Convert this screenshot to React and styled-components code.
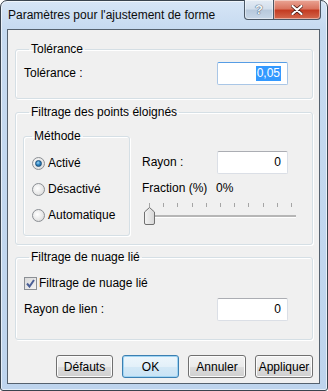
import styled, { createGlobalStyle } from 'styled-components'

const Global = createGlobalStyle`
  html, body { margin: 0; padding: 0; background: #ffffff; }
  body { font-family: "Segoe UI", "Liberation Sans", Arial, sans-serif; font-size: 12px; color: #000; }
`

const Window = styled.div`
  width: 328px;
  height: 391px;
  box-sizing: border-box;
  border: 1px solid #39434e;
  border-radius: 7px 7px 3px 3px;
  background: linear-gradient(180deg, #d6e5f6 0px, #c6daf0 28px, #bed4ed 100%);
  display: flex;
  flex-direction: column;
  padding: 0 7px 6px 6px;
  box-shadow: inset 0 0 0 1px rgba(255,255,255,0.6);
`

const TitleBar = styled.div`
  height: 28px;
  display: flex;
  align-items: flex-start;
  justify-content: space-between;
`

const Title = styled.div`
  padding: 7px 0 0 1px;
  font-size: 12px;
  color: #0c0c0c;
`

const Caption = styled.div`
  display: flex;
  margin-top: -1px;
  margin-right: -1px;
`

const CapBtn = styled.div`
  height: 20px;
  width: ${p => p.w}px;
  box-sizing: border-box;
  border: 1px solid #4b5866;
  border-top: none;
  display: flex;
  align-items: center;
  justify-content: center;
  color: #fff;
  font-weight: bold;
  font-size: 13px;
  background: ${p => p.close
    ? 'linear-gradient(180deg, #eaa595 0%, #da7560 45%, #c43c22 55%, #d4694d 100%)'
    : 'linear-gradient(180deg, #e3ebf4 0%, #d3dfec 45%, #b8c9dc 55%, #c7d6e7 100%)'};
  border-radius: ${p => p.close ? '0 0 4px 0' : '0 0 0 4px'};
  border-left: ${p => p.close ? 'none' : '1px solid #4b5866'};
  box-shadow: inset 0 0 0 1px rgba(255,255,255,0.45);
`

const Client = styled.div`
  flex: 1;
  background: #f0f0f0;
  border: 1px solid #55616e;
  display: flex;
  flex-direction: column;
  padding: 12px 6px 5px 7px;
`

const Group = styled.fieldset`
  margin: ${p => p.mt || 0}px 0 0 0;
  padding: 0 8px;
  border: 1px solid #d5dfe5;
  border-radius: 3px;
  box-shadow: inset 1px 1px 0 #ffffff, 1px 1px 0 #ffffff;
  min-width: 0;
  height: ${p => p.h}px;
  box-sizing: border-box;
`

const Legend = styled.legend`
  padding: 0 2px;
  margin-left: ${p => p.ml ?? 5}px;
  line-height: 15px;
  font-size: 12px;
`

const Row = styled.div`
  display: flex;
  align-items: center;
  justify-content: space-between;
  height: 22px;
  margin-top: ${p => p.mt || 0}px;
`

const Label = styled.span`
  white-space: nowrap;
  width: ${p => (p.w ? `${p.w}px` : 'auto')};
`

const Input = styled.div`
  width: 71px;
  height: 23px;
  box-sizing: border-box;
  background: #fff;
  border: 1px solid ${p => p.focus ? '#a9c6e6' : '#dbdfe6'};
  border-top-color: ${p => p.focus ? '#569de5' : '#abadb3'};
  border-radius: 2px;
  display: flex;
  align-items: center;
  justify-content: flex-end;
  padding-right: 6px;
  margin-right: 16px;
`

const Selected = styled.span`
  background: #3399ff;
  color: #fff;
  line-height: 15px;
  padding: 0 1px;
`

const Inner = styled.div`
  display: flex;
  gap: 12px;
  margin-left: -1px;
  margin-top: 9px;
`

const MethodGroup = styled.fieldset`
  margin: 0;
  width: 107px;
  height: 107px;
  box-sizing: border-box;
  padding: 0 0 0 8px;
  border: 1px solid #d5dfe5;
  border-radius: 3px;
  box-shadow: inset 1px 1px 0 #ffffff, 1px 1px 0 #ffffff;
  display: flex;
  flex-direction: column;
  gap: 4px;
`

const RadioRow = styled.label`
  display: flex;
  align-items: center;
  gap: 3px;
  height: 22px;
  &:first-of-type { margin-top: 8px; }
`

const RadioDot = styled.span`
  width: 13px;
  height: 13px;
  box-sizing: border-box;
  border-radius: 50%;
  border: 1px solid #8b8f94;
  background: radial-gradient(circle at 40% 40%, #ffffff 0%, #e6e6e6 60%, #cfcfcf 100%);
  display: flex;
  align-items: center;
  justify-content: center;
  &::after {
    content: '';
    display: ${p => p.on ? 'block' : 'none'};
    width: 7px;
    height: 7px;
    border-radius: 50%;
    background: radial-gradient(circle at 40% 35%, #9fd6f7 0%, #2f87c4 45%, #124f83 100%);
    border: 0.5px solid #1c4f7a;
    box-sizing: border-box;
  }
`

const Right = styled.div`
  flex: 1;
  display: flex;
  flex-direction: column;
  padding-top: 22px;
`

const FractionRow = styled.div`
  display: flex;
  height: 20px;
  align-items: center;
  margin-top: 5px;
`

const Slider = styled.div`
  position: relative;
  height: 28px;
  margin-right: 8px;
`

const Ticks = styled.div`
  display: flex;
  justify-content: space-between;
  padding: 5px 4px 0 7px;
`

const Tick = styled.span`
  width: 1px;
  height: 4px;
  background: #a5a5a5;
`

const Track = styled.div`
  position: absolute;
  left: 3px;
  right: 0;
  top: 17px;
  height: 2px;
  background: #b6b6b6;
  border-bottom: 1px solid #fff;
`

const Thumb = styled.svg`
  position: absolute;
  left: 2px;
  top: 9px;
`

const CheckRow = styled.label`
  display: flex;
  align-items: center;
  gap: 2px;
  height: 18px;
  margin-top: 9px;
`

const Box = styled.span`
  width: 13px;
  height: 13px;
  box-sizing: border-box;
  border: 1px solid #8b8f94;
  background: linear-gradient(135deg, #d9d9d9 0%, #f4f4f4 100%);
  display: flex;
  align-items: center;
  justify-content: center;
`

const Buttons = styled.div`
  margin-top: auto;
  display: flex;
  justify-content: flex-end;
  gap: 9px;
`

const Button = styled.div`
  width: ${p => p.w || 57}px;
  height: 23px;
  box-sizing: border-box;
  border: 1px solid ${p => p.primary ? '#3c7fb1' : '#707070'};
  border-radius: 3px;
  display: flex;
  align-items: center;
  justify-content: center;
  background: ${p => p.primary
    ? 'linear-gradient(180deg, #edf6fc 0%, #e3f0f9 50%, #d3e8f6 51%, #c9e3f5 100%)'
    : 'linear-gradient(180deg, #f2f2f2 0%, #ebebeb 50%, #dddddd 51%, #cfcfcf 100%)'};
  box-shadow: inset 0 0 0 1px ${p => p.primary ? '#9fd4f3' : '#fcfcfc'};
`

export default function App() {
  return (
    <>
      <Global />
      <Window>
        <TitleBar>
          <Title>Paramètres pour l'ajustement de forme</Title>
          <Caption>
            <CapBtn w={30}>
              <span style={{ color: '#f4f7fb', textShadow: '0 0 1px #33475e, 0 0 1px #33475e' }}>?</span>
            </CapBtn>
            <CapBtn w={47} close>
              <svg width="12" height="10" viewBox="0 0 12 10">
                <path d="M1.5 1 L10.5 9 M10.5 1 L1.5 9" stroke="#4a1a12" strokeWidth="3.6" strokeLinecap="round" />
                <path d="M1.5 1 L10.5 9 M10.5 1 L1.5 9" stroke="#ffffff" strokeWidth="2.2" strokeLinecap="round" />
              </svg>
            </CapBtn>
          </Caption>
        </TitleBar>
        <Client>
          <Group h={57}>
            <Legend>Tolérance</Legend>
            <Row mt={5}>
              <Label>Tolérance :</Label>
              <Input focus><Selected>0,05</Selected></Input>
            </Row>
          </Group>

          <Group h={140} mt={6}>
            <Legend>Filtrage des points éloignés</Legend>
            <Inner>
              <MethodGroup>
                <Legend ml={0}>Méthode</Legend>
                <RadioRow><RadioDot on /><Label>Activé</Label></RadioRow>
                <RadioRow><RadioDot /><Label>Désactivé</Label></RadioRow>
                <RadioRow><RadioDot /><Label>Automatique</Label></RadioRow>
              </MethodGroup>
              <Right>
                <Row>
                  <Label>Rayon :</Label>
                  <Input>0</Input>
                </Row>
                <FractionRow>
                  <Label w={74}>Fraction (%)</Label>
                  <Label>0%</Label>
                </FractionRow>
                <Slider>
                  <Ticks>
                    {Array.from({ length: 11 }).map((_, i) => <Tick key={i} />)}
                  </Ticks>
                  <Track />
                  <Thumb width="11" height="18" viewBox="0 0 11 18">
                    <defs>
                      <linearGradient id="tg" x1="0" x2="1" y1="0" y2="0">
                        <stop offset="0" stopColor="#f4f4f4" />
                        <stop offset="1" stopColor="#d6d6d6" />
                      </linearGradient>
                    </defs>
                    <path d="M0.5 5 L5.5 0.5 L10.5 5 L10.5 16 Q10.5 17.5 9 17.5 L2 17.5 Q0.5 17.5 0.5 16 Z" fill="url(#tg)" stroke="#707070" />
                  </Thumb>
                </Slider>
              </Right>
            </Inner>
          </Group>

          <Group h={90} mt={5}>
            <Legend>Filtrage de nuage lié</Legend>
            <CheckRow>
              <Box>
                <svg width="9" height="9" viewBox="0 0 9 9">
                  <path d="M1 4.5 L3.5 7.5 L8 1" fill="none" stroke="#4a5f97" strokeWidth="2" />
                </svg>
              </Box>
              <Label>Filtrage de nuage lié</Label>
            </CheckRow>
            <Row mt={6}>
              <Label>Rayon de lien :</Label>
              <Input>0</Input>
            </Row>
          </Group>

          <Buttons>
            <Button>Défauts</Button>
            <Button primary>OK</Button>
            <Button w={58}>Annuler</Button>
            <Button w={58}>Appliquer</Button>
          </Buttons>
        </Client>
      </Window>
    </>
  )
}
